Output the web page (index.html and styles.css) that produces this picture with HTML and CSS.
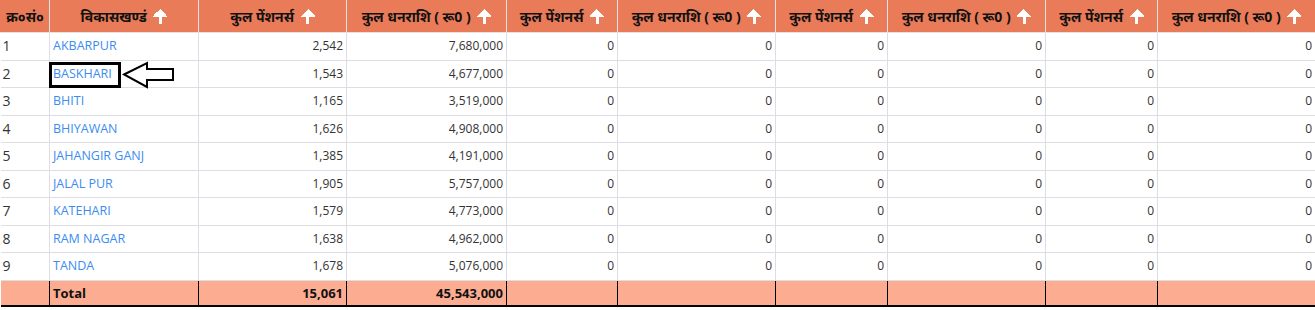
FILE: index.html
```html
<!DOCTYPE html>
<html>
<head>
<meta charset="utf-8">
<link rel="stylesheet" href="styles.css">
</head>
<body>
<div class="wrap">
<table class="grid">
  <colgroup>
    <col style="width:49px"><col style="width:149px"><col style="width:148px"><col style="width:160px">
    <col style="width:111px"><col style="width:158px"><col style="width:112px"><col style="width:158px">
    <col style="width:112px"><col style="width:158px">
  </colgroup>
  <thead>
    <tr>
      <th class="sn">क्र०सं०</th>
      <th>विकासखण्डं <span class="up"></span></th>
      <th>कुल पेंशनर्स <span class="up"></span></th>
      <th>कुल धनराशि ( रू0 ) <span class="up"></span></th>
      <th>कुल पेंशनर्स <span class="up"></span></th>
      <th>कुल धनराशि ( रू0 ) <span class="up"></span></th>
      <th>कुल पेंशनर्स <span class="up"></span></th>
      <th>कुल धनराशि ( रू0 ) <span class="up"></span></th>
      <th>कुल पेंशनर्स <span class="up"></span></th>
      <th>कुल धनराशि ( रू0 ) <span class="up"></span></th>
    </tr>
  </thead>
  <tbody>
    <tr><td class="idx">1</td><td><a class="lnk">AKBARPUR</a></td><td class="num">2,542</td><td class="num">7,680,000</td><td class="num">0</td><td class="num">0</td><td class="num">0</td><td class="num">0</td><td class="num">0</td><td class="num">0</td></tr>
    <tr><td class="idx">2</td><td><a class="lnk">BASKHARI</a></td><td class="num">1,543</td><td class="num">4,677,000</td><td class="num">0</td><td class="num">0</td><td class="num">0</td><td class="num">0</td><td class="num">0</td><td class="num">0</td></tr>
    <tr><td class="idx">3</td><td><a class="lnk">BHITI</a></td><td class="num">1,165</td><td class="num">3,519,000</td><td class="num">0</td><td class="num">0</td><td class="num">0</td><td class="num">0</td><td class="num">0</td><td class="num">0</td></tr>
    <tr><td class="idx">4</td><td><a class="lnk">BHIYAWAN</a></td><td class="num">1,626</td><td class="num">4,908,000</td><td class="num">0</td><td class="num">0</td><td class="num">0</td><td class="num">0</td><td class="num">0</td><td class="num">0</td></tr>
    <tr><td class="idx">5</td><td><a class="lnk">JAHANGIR GANJ</a></td><td class="num">1,385</td><td class="num">4,191,000</td><td class="num">0</td><td class="num">0</td><td class="num">0</td><td class="num">0</td><td class="num">0</td><td class="num">0</td></tr>
    <tr><td class="idx">6</td><td><a class="lnk">JALAL PUR</a></td><td class="num">1,905</td><td class="num">5,757,000</td><td class="num">0</td><td class="num">0</td><td class="num">0</td><td class="num">0</td><td class="num">0</td><td class="num">0</td></tr>
    <tr><td class="idx">7</td><td><a class="lnk">KATEHARI</a></td><td class="num">1,579</td><td class="num">4,773,000</td><td class="num">0</td><td class="num">0</td><td class="num">0</td><td class="num">0</td><td class="num">0</td><td class="num">0</td></tr>
    <tr><td class="idx">8</td><td><a class="lnk">RAM NAGAR</a></td><td class="num">1,638</td><td class="num">4,962,000</td><td class="num">0</td><td class="num">0</td><td class="num">0</td><td class="num">0</td><td class="num">0</td><td class="num">0</td></tr>
    <tr><td class="idx">9</td><td><a class="lnk">TANDA</a></td><td class="num">1,678</td><td class="num">5,076,000</td><td class="num">0</td><td class="num">0</td><td class="num">0</td><td class="num">0</td><td class="num">0</td><td class="num">0</td></tr>
  </tbody>
  <tfoot>
    <tr><td></td><td>Total</td><td class="num">15,061</td><td class="num">45,543,000</td><td></td><td></td><td></td><td></td><td></td><td></td></tr>
  </tfoot>
</table>
<div class="mark"></div>
<svg class="pointer" width="54" height="28" viewBox="0 0 54 28">
  <polygon points="2,13.5 25,2 25,8 51,8 51,19 25,19 25,26" fill="#fff" stroke="#000" stroke-width="2" stroke-linejoin="miter"/>
</svg>
</div>
</body>
</html>
```

FILE: styles.css
```css
html, body {
  margin: 0;
  padding: 0;
  background: #fff;
  overflow: hidden;
}
.wrap {
  position: relative;
  width: 1315px;
}
.grid {
  border-collapse: collapse;
  table-layout: fixed;
  width: 1315px;
  font-family: "Open Sans", "Noto Sans", sans-serif;
  font-size: 12px;
  color: #333;
}
.grid th {
  background: #ea7b58;
  color: #111;
  font-weight: bold;
  font-size: 14px;
  height: 32px;
  padding: 0 2px;
  text-align: center;
  border: 1px solid #e3e3e3;
  border-top: none;
  border-left-color: #ea7b58;
  white-space: nowrap;
}
.grid th + th { border-left-color: #e3e3e3; }
.up {
  display: inline-block;
  width: 14px;
  height: 15px;
  vertical-align: -2px;
  margin-left: 3px;
  background:
    linear-gradient(#fff, #fff) 5.5px 5px / 3px 10px no-repeat,
    conic-gradient(from 135deg at 50% 0, #fff 90deg, transparent 0) 0 0 / 14px 8px no-repeat;
}
.grid td {
  border: 1px solid #dddde3;
  padding: 4px 3px;
  line-height: 18.5px;
  height: 18.5px;
  white-space: nowrap;
}
.grid td:first-child { border-left: none; }
.grid td.idx {
  font-size: 14px;
  padding-left: 2px;
  color: #333;
}
.grid td.num { text-align: right; }
.lnk { color: #3c8cf0; text-decoration: none; font-size: 12.5px; }
.grid tfoot td {
  background: #fcac91;
  border: 1px solid #000;
  border-top: none;
  border-bottom: 2px solid #000;
  font-weight: bold;
  font-size: 13px;
  color: #111;
  height: 16px;
  line-height: 16px;
}
.grid tfoot td:first-child { border-left: none; }
.mark {
  position: absolute;
  left: 49px;
  top: 62px;
  width: 66px;
  height: 20px;
  border: 3px solid #000;
}
.pointer {
  position: absolute;
  left: 122px;
  top: 61px;
}
```
